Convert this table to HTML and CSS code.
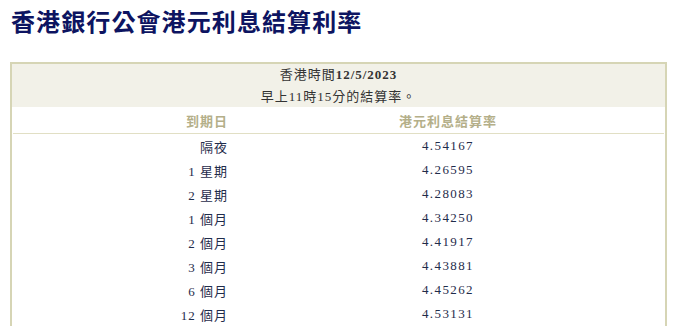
FILE: index.html
```html
<!DOCTYPE html>
<html lang="zh-Hant">
<head>
<meta charset="utf-8">
<title>香港銀行公會港元利息結算利率</title>
<link rel="stylesheet" href="styles.css">
</head>
<body>
<h1 class="title">香港銀行公會港元利息結算利率</h1>
<section class="box">
  <div class="caption">
    <div class="cap-line">香港時間<b>12/5/2023</b></div>
    <div class="cap-line">早上11時15分的結算率。</div>
  </div>
  <div class="row head">
    <div class="c1">到期日</div>
    <div class="c2">港元利息結算率</div>
  </div>
  <div class="sep"></div>
  <div class="row"><div class="c1">隔夜</div><div class="c2">4.54167</div></div>
  <div class="row"><div class="c1">1 星期</div><div class="c2">4.26595</div></div>
  <div class="row"><div class="c1">2 星期</div><div class="c2">4.28083</div></div>
  <div class="row"><div class="c1">1 個月</div><div class="c2">4.34250</div></div>
  <div class="row"><div class="c1">2 個月</div><div class="c2">4.41917</div></div>
  <div class="row"><div class="c1">3 個月</div><div class="c2">4.43881</div></div>
  <div class="row"><div class="c1">6 個月</div><div class="c2">4.45262</div></div>
  <div class="row"><div class="c1">12 個月</div><div class="c2">4.53131</div></div>
</section>
</body>
</html>
```
FILE: styles.css
```css
html, body {
  margin: 0;
  padding: 0;
  background: #ffffff;
}
body {
  padding: 7px 10px 0 10px;
  font-family: "Liberation Serif", "Noto Sans CJK TC", serif;
}
.title {
  margin: 0 0 0 1px;
  font-family: "Noto Sans CJK TC", sans-serif;
  font-size: 24px;
  font-weight: 700;
  line-height: 27px;
  letter-spacing: 1.1px;
  color: #0d1461;
}
.box {
  margin-top: 28px;
  width: 653px;
  border: 2px solid #d6d5b5;
  border-bottom: none;
  font-size: 13px;
  letter-spacing: 1px;
}
.caption {
  background: #f2f1e8;
  padding: 0;
  height: 43px;
  color: #333333;
  text-align: center;
}
.cap-line {
  line-height: 22px;
}
.cap-line b {
  font-weight: 700;
}
.row {
  display: grid;
  grid-template-columns: 216px 1fr;
  height: 24px;
  align-items: center;
  color: #1f2c4b;
}
.row .c1 {
  text-align: right;
}
.row .c2 {
  text-align: center;
  padding-left: 5px;
  padding-right: 2px;
  letter-spacing: 1.4px;
}
.row.head {
  height: 26px;
  font-weight: 700;
  color: #b4af89;
  font-family: "Noto Sans CJK TC", sans-serif;
}
.row.head .c2 {
  letter-spacing: 1px;
}
.sep {
  height: 1px;
  margin: 0 1px;
  background: #e1dfc4;
}
```
